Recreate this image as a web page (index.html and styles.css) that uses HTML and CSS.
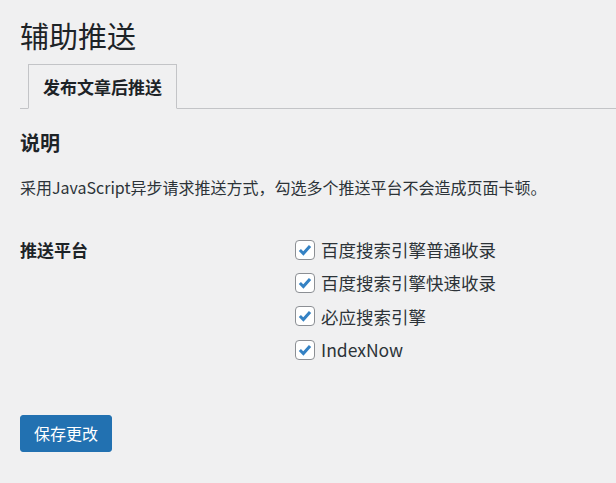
FILE: index.html
```html
<!DOCTYPE html>
<html lang="zh-CN">
<head>
<meta charset="utf-8">
<title>辅助推送</title>
<link rel="stylesheet" href="styles.css">
</head>
<body>
<div class="wrap">
  <h1 class="page-title">辅助推送</h1>
  <nav class="tabs">
    <a class="tab tab-active" href="#">发布文章后推送</a>
  </nav>

  <h2 class="section-title">说明</h2>
  <p class="desc">采用JavaScript异步请求推送方式，勾选多个推送平台不会造成页面卡顿。</p>

  <div class="form-row">
    <div class="form-label">推送平台</div>
    <div class="form-field">
      <label class="check"><span class="box"><svg viewBox="0 0 20 20" width="20" height="20"><path d="M4.3 10 L8.2 13.9 L15.6 5.6" /></svg></span>百度搜索引擎普通收录</label>
      <label class="check"><span class="box"><svg viewBox="0 0 20 20" width="20" height="20"><path d="M4.3 10 L8.2 13.9 L15.6 5.6" /></svg></span>百度搜索引擎快速收录</label>
      <label class="check"><span class="box"><svg viewBox="0 0 20 20" width="20" height="20"><path d="M4.3 10 L8.2 13.9 L15.6 5.6" /></svg></span>必应搜索引擎</label>
      <label class="check"><span class="box"><svg viewBox="0 0 20 20" width="20" height="20"><path d="M4.3 10 L8.2 13.9 L15.6 5.6" /></svg></span>IndexNow</label>
    </div>
  </div>

  <button class="button-primary" type="button">保存更改</button>
</div>
</body>
</html>
```

FILE: styles.css
```css
html, body {
  margin: 0;
  padding: 0;
  background: #f0f0f1;
}

body {
  font-family: "Noto Sans CJK SC", "Noto Sans", sans-serif;
  color: #3c434a;
}

.wrap {
  padding: 17px 0 0 20px;
}

.page-title {
  margin: 0;
  font-size: 29px;
  font-weight: 400;
  line-height: 36px;
  color: #1d2327;
}

.tabs {
  margin-top: 11px;
  display: flex;
  border-bottom: 1px solid #c3c4c7;
}

.tab {
  margin-left: 8px;
  margin-bottom: -1px;
  padding: 9px 14px;
  line-height: 25px;
  font-size: 17px;
  font-weight: 700;
  color: #1d2327;
  text-decoration: none;
  border: 1px solid #c3c4c7;
  border-bottom-color: #f0f0f1;
  background: #f0f0f1;
}

.section-title {
  margin: 20px 0 0;
  font-size: 20px;
  font-weight: 700;
  line-height: 28px;
  color: #1d2327;
}

.desc {
  margin: 18px 0 0;
  font-size: 16px;
  line-height: 24px;
  color: #2c3338;
}

.form-row {
  margin-top: 34px;
  display: flex;
}

.form-label {
  width: 275px;
  flex: none;
  font-size: 17px;
  font-weight: 700;
  line-height: 33px;
  color: #1d2327;
}

.form-field {
  display: flex;
  flex-direction: column;
}

.check {
  display: flex;
  align-items: center;
  height: 33.3px;
  font-size: 17.5px;
  color: #2c3338;
}

.box {
  width: 18px;
  height: 18px;
  margin-right: 6px;
  border: 1px solid #8c8f94;
  border-radius: 4px;
  background: #fff;
  display: flex;
  align-items: center;
  justify-content: center;
}

.box svg {
  width: 18px;
  height: 18px;
  fill: none;
  stroke: #3582c4;
  stroke-width: 3.4;
  stroke-linecap: butt;
  stroke-linejoin: miter;
}

.button-primary {
  margin-top: 49px;
  height: 37px;
  padding: 0 13px;
  font-family: inherit;
  font-size: 16px;
  line-height: 35px;
  color: #fff;
  background: #2271b1;
  border: 1px solid #2271b1;
  border-radius: 3px;
  cursor: pointer;
}
```
